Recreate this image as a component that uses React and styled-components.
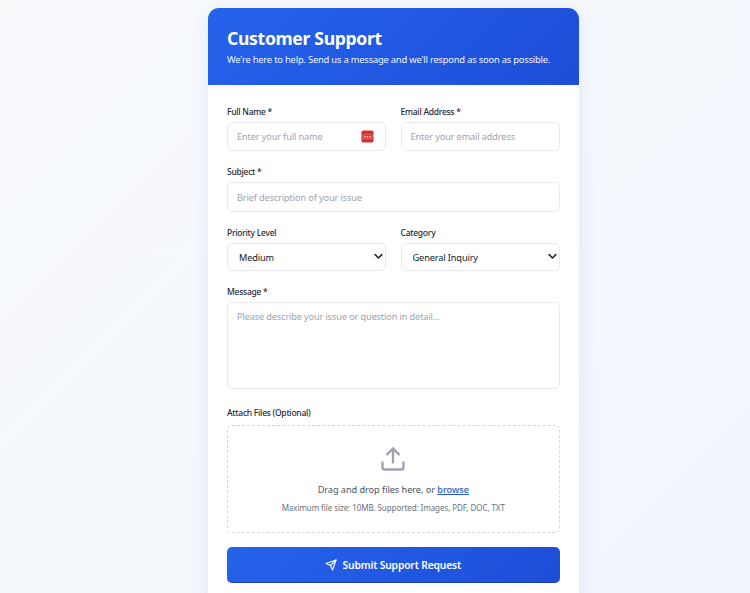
import React from "react";
import styled, { createGlobalStyle } from "styled-components";

const Global = createGlobalStyle`
  html, body { margin: 0; padding: 0; height: 100%; overflow: hidden; }
  body {
    font-family: "Noto Sans", "Open Sans", sans-serif;
    background: linear-gradient(135deg, #f8fafc 0%, #f1f5fd 100%);
  }
  * { box-sizing: border-box; }
`;

const Page = styled.div`
  display: flex;
  justify-content: flex-start;
  padding: 8px 0 0 208px;
  height: 593px;
  overflow: hidden;
`;

const Card = styled.main`
  width: 371px;
  flex: none;
  background: #fff;
  border-radius: 11px 11px 0 0;
  box-shadow: 0 4px 18px rgba(37, 99, 235, 0.1);
  align-self: flex-start;
`;

const Header = styled.header`
  height: 77px;
  padding: 17px 19px 0;
  color: #fff;
  border-radius: 11px 11px 0 0;
  background: linear-gradient(135deg, #2563eb 0%, #1d4ed8 100%);
`;

const Title = styled.h1`
  margin: 0;
  font-size: 17.6px;
  line-height: 26px;
  font-weight: 700;
  letter-spacing: -0.33px;
  white-space: nowrap;
`;

const Subtitle = styled.p`
  margin: 1px 0 0;
  font-size: 9.4px;
  line-height: 15px;
  letter-spacing: -0.21px;
  color: #eff4ff;
  white-space: nowrap;
`;

const Form = styled.form`
  padding: 19px 19.5px 24px 19px;
  display: flex;
  flex-direction: column;
`;

const Row = styled.div`
  display: grid;
  grid-template-columns: 159px 159px;
  column-gap: 14.5px;
  margin-bottom: ${(p) => p.$mb || 0}px;
`;

const Field = styled.div`
  display: flex;
  flex-direction: column;
  margin-bottom: ${(p) => p.$mb || 0}px;
`;

const Label = styled.label`
  font-size: 8.5px;
  line-height: 15px;
  font-weight: 500;
  letter-spacing: -0.26px;
  color: #1f2937;
  margin-bottom: ${(p) => p.$mb || 3}px;
`;

const InputWrap = styled.div`
  position: relative;
`;

const Input = styled.input`
  width: 100%;
  height: ${(p) => p.$h || 30}px;
  padding: 0 9px;
  border: 1px solid #e8eaee;
  border-radius: 5px;
  font: inherit;
  font-size: 9.1px;
  letter-spacing: -0.09px;
  background: #fff;
  outline: none;
  &::placeholder { color: #9ca3af; opacity: 1; }
`;

const Select = styled.select`
  appearance: none;
  display: block;
  width: 100%;
  height: 28px;
  padding: 0 11px;
  border: 1px solid #e8eaee;
  border-radius: 5px;
  font: inherit;
  font-size: 9.2px;
  letter-spacing: -0.12px;
  color: #111827;
  background: #fff;
  outline: none;
`;

const Chevron = styled.svg`
  position: absolute;
  top: 10px;
  right: 3px;
  width: 9px;
  height: 7px;
  pointer-events: none;
`;

const TextArea = styled.textarea`
  display: block;
  width: 100%;
  height: 87px;
  padding: 6px 9px;
  border: 1px solid #e8eaee;
  border-radius: 5px;
  font: inherit;
  font-size: 9.1px;
  line-height: 15px;
  letter-spacing: -0.09px;
  resize: none;
  outline: none;
  &::placeholder { color: #9ca3af; opacity: 1; }
`;

const FillIcon = styled.svg`
  position: absolute;
  top: 8px;
  right: 12px;
  width: 13px;
  height: 13px;
`;

const Drop = styled.div`
  height: 108px;
  border: 1px dashed #d5d8dd;
  border-radius: 5px;
  display: flex;
  flex-direction: column;
  align-items: center;
  padding-top: 19px;
`;

const UploadIcon = styled.svg`
  width: 28px;
  height: 28px;
  color: #9ca3af;
`;

const DropText = styled.p`
  margin: 9px 0 0;
  font-size: 9.2px;
  line-height: 15px;
  letter-spacing: -0.06px;
  color: #4b5563;
`;

const Browse = styled.a`
  color: #2b5bc8;
  font-weight: 500;
  text-decoration: underline;
`;

const DropHint = styled.p`
  margin: 4px 0 0;
  font-size: 8px;
  line-height: 13px;
  letter-spacing: -0.07px;
  color: #6b7280;
`;

const Submit = styled.button`
  margin-top: 14px;
  height: 36px;
  border: 0;
  border-bottom: 1px solid #1e40af;
  border-radius: 5px;
  color: #fff;
  font: inherit;
  font-size: 10.3px;
  font-weight: 600;
  letter-spacing: -0.16px;
  display: flex;
  align-items: center;
  justify-content: center;
  gap: 5px;
  background: linear-gradient(135deg, #2563eb 0%, #1d4ed8 100%);
`;

const SelectField = ({ label, value, options }) => (
  <Field>
    <Label>{label}</Label>
    <InputWrap>
      <Select defaultValue={value}>
        {options.map((o) => (
          <option key={o}>{o}</option>
        ))}
      </Select>
      <Chevron viewBox="0 0 9 7" fill="none" stroke="#1f2937" strokeWidth="1.6" strokeLinecap="round" strokeLinejoin="round">
        <path d="M1.2 1.6 4.5 5 7.8 1.6" />
      </Chevron>
    </InputWrap>
  </Field>
);

export default function App() {
  return (
    <>
      <Global />
      <Page>
        <Card>
          <Header>
            <Title>Customer Support</Title>
            <Subtitle>We're here to help. Send us a message and we'll respond as soon as possible.</Subtitle>
          </Header>
          <Form>
            <Row $mb={13}>
              <Field>
                <Label>Full Name *</Label>
                <InputWrap>
                  <Input $h={29} placeholder="Enter your full name" />
                  <FillIcon viewBox="0 0 14 14">
                    <rect x="0.5" y="0.5" width="13" height="13" rx="2" fill="#d32f2f" />
                    <rect x="2" y="5" width="10" height="4.4" rx="0.5" fill="none" stroke="#fff" strokeWidth="0.6" strokeOpacity="0.5" />
                    <circle cx="4.4" cy="7.2" r="0.85" fill="#fff" />
                    <circle cx="7" cy="7.2" r="0.85" fill="#fff" />
                    <circle cx="9.6" cy="7.2" r="0.85" fill="#fff" />
                  </FillIcon>
                </InputWrap>
              </Field>
              <Field>
                <Label>Email Address *</Label>
                <Input $h={29} placeholder="Enter your email address" />
              </Field>
            </Row>
            <Field $mb={13}>
              <Label>Subject *</Label>
              <Input placeholder="Brief description of your issue" />
            </Field>
            <Row $mb={13}>
              <SelectField label="Priority Level" value="Medium" options={["Low", "Medium", "High"]} />
              <SelectField label="Category" value="General Inquiry" options={["General Inquiry", "Technical Issue"]} />
            </Row>
            <Field $mb={16}>
              <Label>Message *</Label>
              <TextArea placeholder="Please describe your issue or question in detail..." />
            </Field>
            <Field>
              <Label $mb={5}>Attach Files (Optional)</Label>
              <Drop>
                <UploadIcon viewBox="0 0 24 24" fill="none" stroke="currentColor" strokeWidth="2" strokeLinecap="round" strokeLinejoin="round">
                  <path d="M21 15v4a2 2 0 0 1-2 2H5a2 2 0 0 1-2-2v-4" />
                  <polyline points="17 8 12 3 7 8" />
                  <line x1="12" y1="3" x2="12" y2="15" />
                </UploadIcon>
                <DropText>Drag and drop files here, or <Browse href="#">browse</Browse></DropText>
                <DropHint>Maximum file size: 10MB. Supported: Images, PDF, DOC, TXT</DropHint>
              </Drop>
            </Field>
            <Submit type="button">
              <svg width="12" height="12" viewBox="0 0 24 24" fill="none" stroke="currentColor" strokeWidth="2.2" strokeLinecap="round" strokeLinejoin="round">
                <path d="M22 2 11 13" />
                <path d="M22 2 15 22l-4-9-9-4 20-7z" />
              </svg>
              Submit Support Request
            </Submit>
          </Form>
        </Card>
      </Page>
    </>
  );
}
